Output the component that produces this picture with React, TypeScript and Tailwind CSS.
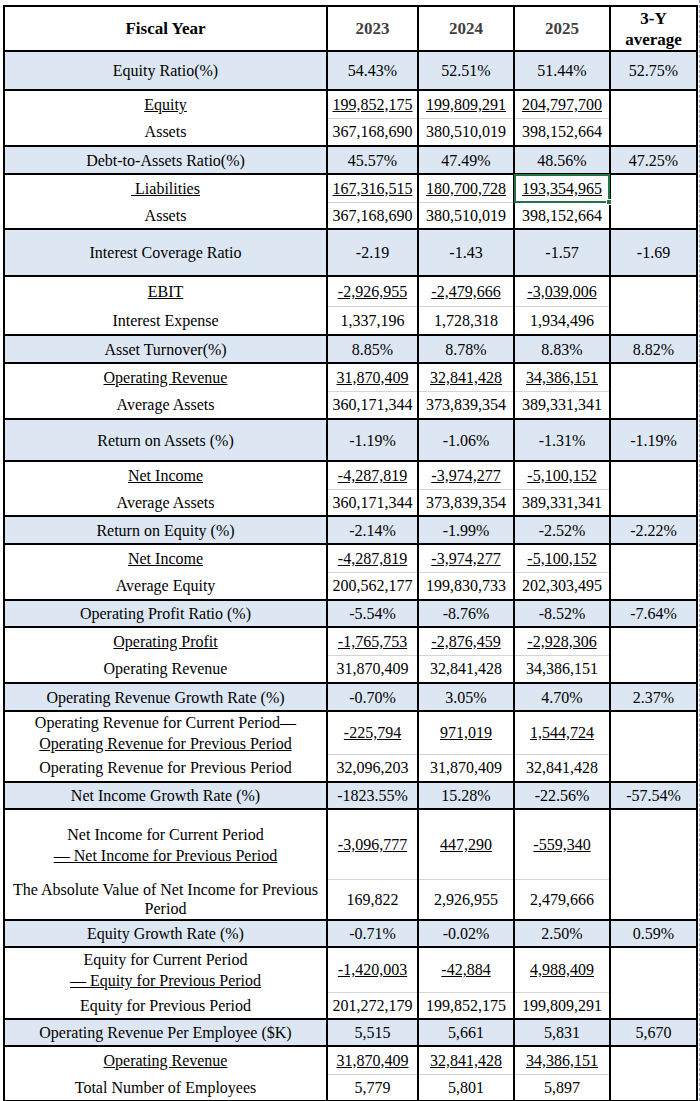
import React from "react";

type Line = { label: React.ReactNode; values: string[]; h: number; selected?: number };
type Group = { label: string; values: string[]; h: number; num: Line; den: Line };

const opRev = ["31,870,409", "32,841,428", "34,386,151"];
const netIncome = ["-4,287,819", "-3,974,277", "-5,100,152"];
const avgAssets = ["360,171,344", "373,839,354", "389,331,341"];
const assets = ["367,168,690", "380,510,019", "398,152,664"];

const groups: Group[] = [
  {
    label: "Equity Ratio(%)",
    values: ["54.43%", "52.51%", "51.44%", "52.75%"],
    h: 39,
    num: { label: <u>Equity</u>, values: ["199,852,175", "199,809,291", "204,797,700"], h: 28 },
    den: { label: "Assets", values: assets, h: 28 },
  },
  {
    label: "Debt-to-Assets Ratio(%)",
    values: ["45.57%", "47.49%", "48.56%", "47.25%"],
    h: 28,
    num: { label: <u>&nbsp;Liabilities</u>, values: ["167,316,515", "180,700,728", "193,354,965"], h: 28, selected: 2 },
    den: { label: "Assets", values: assets, h: 27 },
  },
  {
    label: "Interest Coverage Ratio",
    values: ["-2.19", "-1.43", "-1.57", "-1.69"],
    h: 47,
    num: { label: <u>EBIT</u>, values: ["-2,926,955", "-2,479,666", "-3,039,006"], h: 30 },
    den: { label: "Interest Expense", values: ["1,337,196", "1,728,318", "1,934,496"], h: 29 },
  },
  {
    label: "Asset Turnover(%)",
    values: ["8.85%", "8.78%", "8.83%", "8.82%"],
    h: 28,
    num: { label: <u>Operating Revenue</u>, values: opRev, h: 28 },
    den: { label: "Average Assets", values: avgAssets, h: 28 },
  },
  {
    label: "Return on Assets (%)",
    values: ["-1.19%", "-1.06%", "-1.31%", "-1.19%"],
    h: 42,
    num: { label: <u>Net Income</u>, values: netIncome, h: 28 },
    den: { label: "Average Assets", values: avgAssets, h: 27 },
  },
  {
    label: "Return on Equity (%)",
    values: ["-2.14%", "-1.99%", "-2.52%", "-2.22%"],
    h: 28,
    num: { label: <u>Net Income</u>, values: netIncome, h: 28 },
    den: { label: "Average Equity", values: ["200,562,177", "199,830,733", "202,303,495"], h: 28 },
  },
  {
    label: "Operating Profit Ratio (%)",
    values: ["-5.54%", "-8.76%", "-8.52%", "-7.64%"],
    h: 27,
    num: { label: <u>Operating Profit</u>, values: ["-1,765,753", "-2,876,459", "-2,928,306"], h: 28 },
    den: { label: "Operating Revenue", values: opRev, h: 28 },
  },
  {
    label: "Operating Revenue Growth Rate (%)",
    values: ["-0.70%", "3.05%", "4.70%", "2.37%"],
    h: 28,
    num: {
      label: (
        <>
          Operating Revenue for Current Period—
          <br />
          <u>Operating Revenue for Previous Period</u>
        </>
      ),
      values: ["-225,794", "971,019", "1,544,724"],
      h: 41,
    },
    den: { label: "Operating Revenue for Previous Period", values: ["32,096,203", "31,870,409", "32,841,428"], h: 28 },
  },
  {
    label: "Net Income Growth Rate (%)",
    values: ["-1823.55%", "15.28%", "-22.56%", "-57.54%"],
    h: 27,
    num: {
      label: (
        <>
          Net Income for Current Period
          <br />
          <u>— Net Income for Previous Period</u>
        </>
      ),
      values: ["-3,096,777", "447,290", "-559,340"],
      h: 70,
    },
    den: {
      label: (
        <>
          The Absolute Value of Net Income for Previous
          <br />
          Period
        </>
      ),
      values: ["169,822", "2,926,955", "2,479,666"],
      h: 41,
    },
  },
  {
    label: "Equity Growth Rate (%)",
    values: ["-0.71%", "-0.02%", "2.50%", "0.59%"],
    h: 27,
    num: {
      label: (
        <>
          Equity for Current Period
          <br />
          <u>— Equity for Previous Period</u>
        </>
      ),
      values: ["-1,420,003", "-42,884", "4,988,409"],
      h: 45,
    },
    den: { label: "Equity for Previous Period", values: ["201,272,179", "199,852,175", "199,809,291"], h: 27 },
  },
  {
    label: "Operating Revenue Per Employee ($K)",
    values: ["5,515", "5,661", "5,831", "5,670"],
    h: 27,
    num: { label: <u>Operating Revenue</u>, values: opRev, h: 28 },
    den: { label: "Total Number of Employees", values: ["5,779", "5,801", "5,897"], h: 27 },
  },
];

function GroupRows({ g }: { g: Group }) {
  return (
    <>
      <tr style={{ height: g.h }}>
        <td className="border-2 border-black bg-[#dde7f3] p-0 text-center">{g.label}</td>
        {g.values.map((v, i) => (
          <td key={i} className="border-2 border-black bg-[#dde7f3] p-0 text-center">
            {v}
          </td>
        ))}
      </tr>
      <tr style={{ height: g.num.h }}>
        <td className="border-x-2 border-t-2 border-black p-0 text-center leading-[21px]">{g.num.label}</td>
        {g.num.values.map((v, i) => (
          <td
            key={i}
            className="relative border-x-2 border-t-2 border-b border-black border-b-[#d4d4d4] p-0 text-center"
          >
            <u>{v}</u>
            {g.num.selected === i && (
              <div className="absolute -inset-[1px] border-2 border-[#217346]">
                <div className="absolute -right-[4px] -bottom-[4px] h-[6px] w-[6px] border border-white bg-[#217346]" />
              </div>
            )}
          </td>
        ))}
        <td rowSpan={2} className="border-2 border-black p-0" />
      </tr>
      <tr style={{ height: g.den.h }}>
        <td className="border-x-2 border-b-2 border-black p-0 text-center leading-[19px]">{g.den.label}</td>
        {g.den.values.map((v, i) => (
          <td key={i} className="border-x-2 border-b-2 border-black p-0 text-center">
            {v}
          </td>
        ))}
      </tr>
    </>
  );
}

export default function App() {
  return (
    <div className="h-[1101px] w-[700px] overflow-hidden border-r border-dashed border-gray-400 bg-white pt-[5px] pl-[3px] font-['Liberation_Serif',serif] text-[16px] leading-[19px] text-black">
      <table className="table-fixed border-collapse">
        <colgroup>
          <col className="w-[323px]" />
          <col className="w-[91px]" />
          <col className="w-[96px]" />
          <col className="w-[96px]" />
          <col className="w-[87px]" />
        </colgroup>
        <thead>
          <tr className="h-[45px] text-[17px] font-bold">
            <th className="border-2 border-black p-0 text-center">Fiscal Year</th>
            <th className="border-2 border-black p-0 text-center text-[#3f3f3f]">2023</th>
            <th className="border-2 border-black p-0 text-center text-[#3f3f3f]">2024</th>
            <th className="border-2 border-black p-0 text-center text-[#3f3f3f]">2025</th>
            <th className="border-2 border-black p-0 text-center leading-[21px]">
              3-Y
              <br />
              average
            </th>
          </tr>
        </thead>
        <tbody>
          {groups.map((g, i) => (
            <GroupRows key={i} g={g} />
          ))}
        </tbody>
      </table>
    </div>
  );
}
